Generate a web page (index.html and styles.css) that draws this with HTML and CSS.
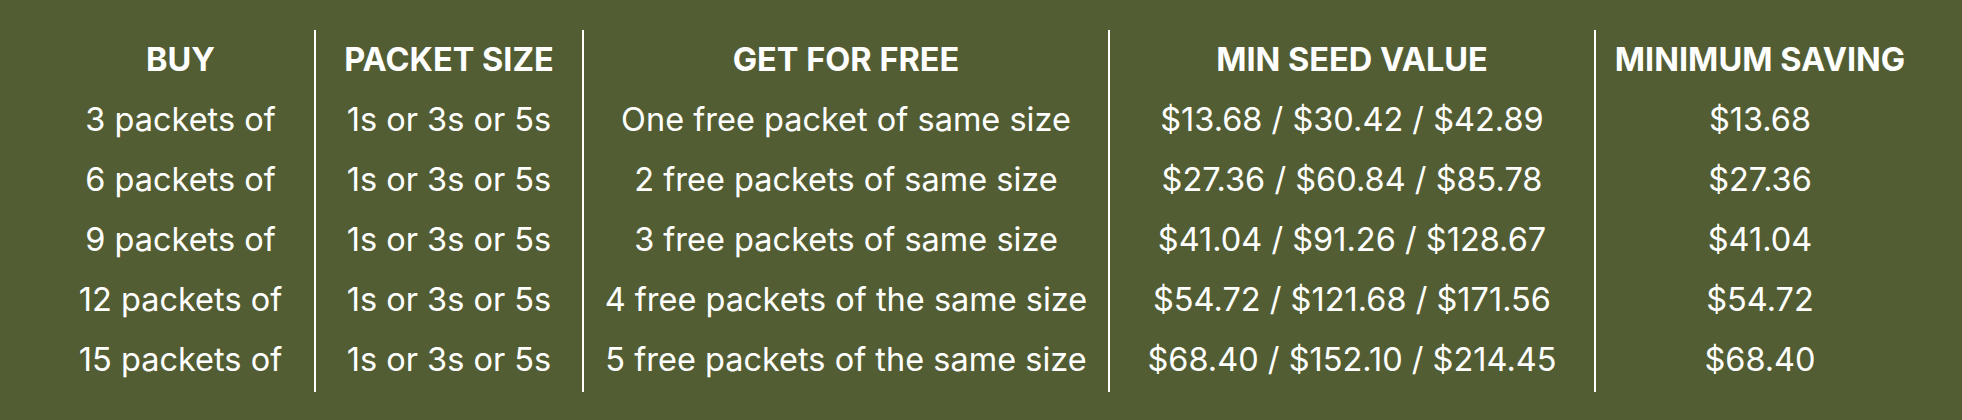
FILE: index.html
```html
<!DOCTYPE html>
<html lang="en">
<head>
<meta charset="utf-8">
<title>Seed packet offers</title>
<link rel="stylesheet" href="styles.css">
</head>
<body>
<div class="offer-table">
  <div class="col col-buy">
    <div class="cell head">BUY</div>
    <div class="cell">3 packets of</div>
    <div class="cell">6 packets of</div>
    <div class="cell">9 packets of</div>
    <div class="cell">12 packets of</div>
    <div class="cell">15 packets of</div>
  </div>
  <div class="col col-size">
    <div class="cell head">PACKET SIZE</div>
    <div class="cell">1s or 3s or 5s</div>
    <div class="cell">1s or 3s or 5s</div>
    <div class="cell">1s or 3s or 5s</div>
    <div class="cell">1s or 3s or 5s</div>
    <div class="cell">1s or 3s or 5s</div>
  </div>
  <div class="col col-free">
    <div class="cell head">GET FOR FREE</div>
    <div class="cell">One free packet of same size</div>
    <div class="cell">2 free packets of same size</div>
    <div class="cell">3 free packets of same size</div>
    <div class="cell">4 free packets of the same size</div>
    <div class="cell">5 free packets of the same size</div>
  </div>
  <div class="col col-value">
    <div class="cell head">MIN SEED VALUE</div>
    <div class="cell">$13.68 / $30.42 / $42.89</div>
    <div class="cell">$27.36 / $60.84 / $85.78</div>
    <div class="cell">$41.04 / $91.26 / $128.67</div>
    <div class="cell">$54.72 / $121.68 / $171.56</div>
    <div class="cell">$68.40 / $152.10 / $214.45</div>
  </div>
  <div class="col col-saving">
    <div class="cell head">MINIMUM SAVING</div>
    <div class="cell">$13.68</div>
    <div class="cell">$27.36</div>
    <div class="cell">$41.04</div>
    <div class="cell">$54.72</div>
    <div class="cell">$68.40</div>
  </div>
</div>
</body>
</html>
```

FILE: styles.css
```css
html, body {
  margin: 0;
  padding: 0;
  background: #535d33;
}

body {
  width: 1962px;
  height: 420px;
  overflow: hidden;
  font-family: Inter, "Noto Sans", "Liberation Sans", sans-serif;
  color: #ffffff;
}

.offer-table {
  display: grid;
  grid-template-columns: 267px 268px 526px 486px 330px;
  margin: 30px 0 0 47px;
  width: max-content;
}

.col {
  display: flex;
  flex-direction: column;
  padding-bottom: 2px;
}

.col + .col {
  border-left: 2px solid #ffffff;
}

.cell {
  height: 60px;
  line-height: 60px;
  font-size: 32.5px;
  text-align: center;
  white-space: nowrap;
}

.cell.head {
  font-weight: 700;
  letter-spacing: 0;
}
```
